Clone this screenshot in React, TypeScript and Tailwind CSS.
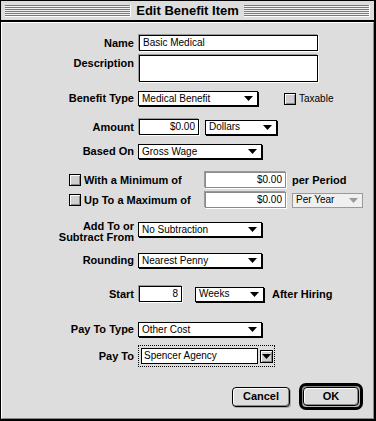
import React from "react";

const label = "font-['Liberation_Sans',Arial,sans-serif] text-[11px] font-bold leading-[11px] text-black";
const body = "font-['Liberation_Sans',Arial,sans-serif] text-[10px] leading-[10px] text-black";

const Arrow = ({ gray = false }: { gray?: boolean }) => (
  <svg width="9" height="5" viewBox="0 0 9 5" className="shrink-0">
    <polygon points="0,0 9,0 4.5,5" fill={gray ? "#9a9a9a" : "#000"} />
  </svg>
);

const Popup = ({ text, w }: { text: string; w: string }) => (
  <div
    className={`${w} h-[15px] flex items-center justify-between border border-black bg-white pl-[3px] pr-[4px] shadow-[1px_1px_0_#000]`}
  >
    <span className={body}>{text}</span>
    <Arrow />
  </div>
);

const Field = ({ text, w, h = "h-[16px]", right = false, dim = false }: { text: string; w: string; h?: string; right?: boolean; dim?: boolean }) => (
  <div
    className={`${w} ${h} ml-[1px] flex items-center bg-white px-[3px] border ${dim ? "border-[#8a8a8a]" : "border-black"} shadow-[-1px_-1px_0_#9a9a9a,1px_1px_0_#fff] ${right ? "justify-end" : ""}`}
  >
    <span className={`${body} ${dim ? "text-[#555]" : ""}`}>{text}</span>
  </div>
);

const Check = () => (
  <div className="w-[12px] h-[12px] shrink-0 border border-black bg-[#cfcfcf] shadow-[inset_1px_1px_0_#fff,inset_-1px_-1px_0_#8a8a8a]" />
);

const Row = ({ name, mt, h, children, top = false }: { name: React.ReactNode; mt: string; h: string; children: React.ReactNode; top?: boolean }) => (
  <div className={`flex ${top ? "items-start" : "items-center"} ${mt} ${h}`}>
    <div className={`w-[132px] shrink-0 text-right ${label} ${top ? "pt-[3px]" : ""}`}>{name}</div>
    <div className="ml-[4px] flex items-center">{children}</div>
  </div>
);

const Stripes = () => (
  <div className="flex-1 h-[12px] bg-[repeating-linear-gradient(to_bottom,#7a7a7a_0px,#7a7a7a_1px,#f2f2f2_1px,#f2f2f2_2px)] border-r border-b border-[#fff]" />
);

export default function App() {
  return (
    <div className="w-[376px] h-[421px] bg-[#dddddd] border-t border-l border-r-2 border-b-2 border-black flex flex-col overflow-hidden">
      <div className="h-[21px] shrink-0 flex items-center px-[4px] border-b-2 border-black bg-[#dddddd]">
        <Stripes />
        <div className="px-[5px] font-['Liberation_Sans',Arial,sans-serif] text-[13px] font-bold leading-[13px] text-black">
          Edit Benefit Item
        </div>
        <Stripes />
      </div>
      <div className="flex-1 flex flex-col border-t border-l border-white border-r border-b border-r-[#8a8a8a] border-b-[#8a8a8a]">
        <Row name="Name" mt="mt-[12px]" h="h-[16px]">
          <Field text="Basic Medical" w="w-[179px]" />
        </Row>
        <Row name="Description" mt="mt-[4px]" h="h-[27px]" top>
          <Field text="" w="w-[179px]" h="h-[27px]" />
        </Row>
        <Row name="Benefit Type" mt="mt-[9px]" h="h-[15px]">
          <Popup text="Medical Benefit" w="w-[120px]" />
          <div className="ml-[26px] flex items-center">
            <Check />
            <span className={`${body} ml-[3px]`}>Taxable</span>
          </div>
        </Row>
        <Row name="Amount" mt="mt-[13px]" h="h-[16px]">
          <Field text="$0.00" w="w-[60px]" right />
          <div className="ml-[6px]">
            <Popup text="Dollars" w="w-[72px]" />
          </div>
        </Row>
        <Row name="Based On" mt="mt-[9px]" h="h-[15px]">
          <Popup text="Gross Wage" w="w-[124px]" />
        </Row>

        <div className="mt-[13px] h-[16px] flex items-center pl-[67px]">
          <div className="w-[135px] flex items-center">
            <Check />
            <span className={`${label} ml-[3px]`}>With a Minimum of</span>
          </div>
          <Field text="$0.00" w="w-[81px]" right dim />
          <span className={`${label} ml-[6px]`}>per Period</span>
        </div>
        <div className="mt-[4px] h-[16px] flex items-center pl-[67px]">
          <div className="w-[135px] flex items-center">
            <Check />
            <span className={`${label} ml-[3px]`}>Up To a Maximum of</span>
          </div>
          <Field text="$0.00" w="w-[81px]" right dim />
          <div className="ml-[6px] w-[71px] h-[15px] flex items-center justify-between border border-[#9a9a9a] bg-[#f0f0f0] pl-[3px] pr-[4px]">
            <span className={`${body} text-[#8a8a8a]`}>Per Year</span>
            <Arrow gray />
          </div>
        </div>

        <div className="mt-[13px] h-[22px] flex items-start">
          <div className={`w-[132px] shrink-0 text-right ${label}`}>
            <div>Add To or</div>
            <div>Subtract From</div>
          </div>
          <div className="ml-[4px] mt-[1px]">
            <Popup text="No Subtraction" w="w-[124px]" />
          </div>
        </div>
        <Row name="Rounding" mt="mt-[10px]" h="h-[15px]">
          <Popup text="Nearest Penny" w="w-[124px]" />
        </Row>
        <Row name="Start" mt="mt-[18px]" h="h-[16px]">
          <Field text="8" w="w-[43px]" right />
          <div className="ml-[13px]">
            <Popup text="Weeks" w="w-[69px]" />
          </div>
          <span className={`${label} ml-[8px]`}>After Hiring</span>
        </Row>
        <Row name="Pay To Type" mt="mt-[20px]" h="h-[15px]">
          <Popup text="Other Cost" w="w-[124px]" />
        </Row>
        <Row name="Pay To" mt="mt-[8px]" h="h-[22px]">
          <div className="w-[137px] h-[22px] flex items-center pl-[2px] border border-dotted border-black">
            <div className="w-[117px] h-[16px] flex items-center bg-white px-[2px] border border-black">
              <span className={body}>Spencer Agency</span>
            </div>
            <div className="ml-[2px] w-[13px] h-[13px] flex items-center justify-center border border-black bg-[#cfcfcf] shadow-[inset_1px_1px_0_#fff,inset_-1px_-1px_0_#8a8a8a]">
              <Arrow />
            </div>
          </div>
        </Row>

        <div className="mt-[16px] h-[27px] flex items-center justify-end pr-[10px] gap-[9px]">
          <div className={`w-[58px] h-[20px] flex items-center justify-center rounded-[4px] border border-black bg-[#dddddd] shadow-[inset_1px_1px_0_#fff,inset_-1px_-1px_0_#8a8a8a,1px_1px_0_#aaa] ${label}`}>
            Cancel
          </div>
          <div className="w-[64px] h-[27px] rounded-[7px] border-[3px] border-black bg-[#bbbbbb] p-[1px] shadow-[inset_1px_1px_0_#888]">
            <div className={`w-full h-full flex items-center justify-center rounded-[4px] border border-black bg-[#dddddd] shadow-[inset_1px_1px_0_#fff,inset_-1px_-1px_0_#8a8a8a] ${label}`}>
              OK
            </div>
          </div>
        </div>
      </div>
    </div>
  );
}
